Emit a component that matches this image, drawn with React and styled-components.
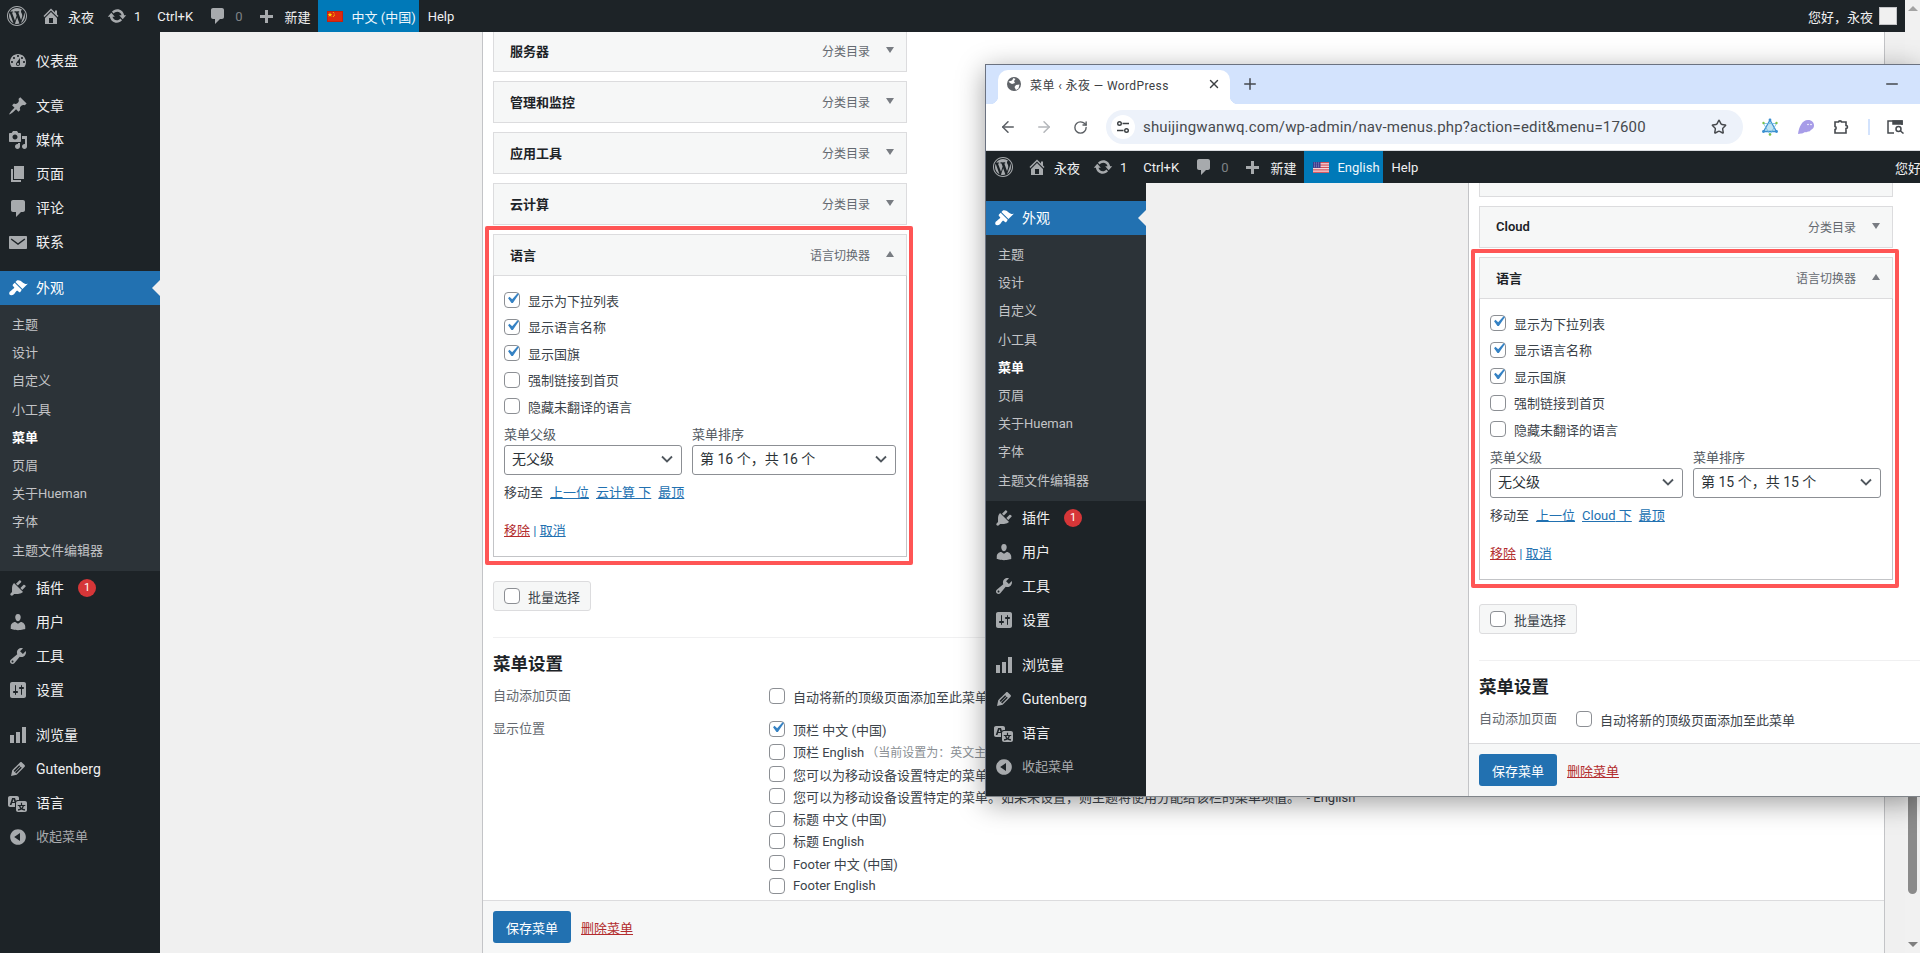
import React from "react";
import styled, { createGlobalStyle } from "styled-components";
import { ArrowLeft, ArrowRight, RotateCw, X, Plus, Minus, Star } from "lucide-react";

const FONT = `Roboto, "Noto Sans CJK SC", sans-serif`;

const Global = createGlobalStyle`
  * { box-sizing: border-box; }
  html, body { margin: 0; padding: 0; height: 953px; overflow: hidden; background: #f0f0f0; }
  body { font-family: ${FONT}; font-size: 13px; color: #3c434a; }
`;

const D = {
  wp: "M20 10c0-5.52-4.48-10-10-10S0 4.48 0 10s4.48 10 10 10 10-4.48 10-10zM10 1.01c4.97 0 8.99 4.02 8.99 8.99s-4.02 8.99-8.99 8.99S1.01 14.97 1.01 10 5.03 1.01 10 1.01zM8.01 14.82L4.96 6.61c.49-.03 1.05-.08 1.05-.08.43-.05.38-1.01-.06-.99 0 0-1.29.1-2.13.1-.15 0-.33 0-.52-.01 1.44-2.17 3.9-3.6 6.7-3.6 2.09 0 3.99.79 5.41 2.09-.6-.08-1.45.35-1.45 1.42 0 .66.38 1.22.79 1.88.31.54.5 1.22.5 2.21 0 1.34-1.27 4.48-1.27 4.48l-2.71-7.5c.48-.03.75-.16.75-.16.43-.05.38-1.1-.05-1.08 0 0-1.3.11-2.14.11-.78 0-2.11-.11-2.11-.11-.43-.02-.48 1.06-.05 1.08l.84.08 1.12 3.04zm6.02 2.15L16.64 10s.67-1.69.39-3.81c.63 1.14.94 2.42.94 3.81 0 2.96-1.56 5.58-3.94 6.97zM2.68 6.77L6.5 17.25c-2.67-1.3-4.47-4.08-4.47-7.25 0-1.16.2-2.23.65-3.23zm7.45 4.53l2.29 6.25c-.75.27-1.57.42-2.42.42-.72 0-1.41-.11-2.06-.3z",
  home: "M16 8.5l1.53 1.53-1.06 1.06L10 4.62l-6.47 6.47-1.06-1.06L10 2.5l4 4v-2h2v4zm-6-2.46l6 5.99V18H4v-5.97zM12 17v-5H8v5h4z",
  update: "M10.2 3.28c3.53 0 6.43 2.61 6.92 6h2.08l-3.5 4-3.5-4h2.32c-.45-1.97-2.21-3.45-4.32-3.45-1.45 0-2.73.71-3.54 1.78L4.95 5.66C6.23 4.2 8.11 3.28 10.2 3.28zm-.4 13.44c-3.52 0-6.43-2.61-6.92-6H.8l3.5-4c1.17 1.33 2.33 2.67 3.5 4H5.48c.45 1.97 2.21 3.45 4.32 3.45 1.45 0 2.73-.71 3.54-1.78l1.71 1.95c-1.28 1.46-3.15 2.38-5.25 2.38z",
  comment: "M5 2h9c1.1 0 2 .9 2 2v7c0 1.1-.9 2-2 2h-2l-5 5v-5H5c-1.1 0-2-.9-2-2V4c0-1.1.9-2 2-2z",
  plus: "M17 9v3h-5v5H9v-5H4V9h5V4h3v5h5z",
  dashboard: "M3.76 16h12.48c1.1-1.37 1.76-3.11 1.76-5 0-4.42-3.58-8-8-8s-8 3.58-8 8c0 1.89.66 3.63 1.76 5zM10 4c.55 0 1 .45 1 1s-.45 1-1 1-1-.45-1-1 .45-1 1-1zM6 6c.55 0 1 .45 1 1s-.45 1-1 1-1-.45-1-1 .45-1 1-1zm8 0c.55 0 1 .45 1 1s-.45 1-1 1-1-.45-1-1 .45-1 1-1zm-5.37 5.55L12 7v6c0 1.1-.9 2-2 2s-2-.9-2-2c0-.57.24-1.08.63-1.45zM4 10c.55 0 1 .45 1 1s-.45 1-1 1-1-.45-1-1 .45-1 1-1zm12 0c.55 0 1 .45 1 1s-.45 1-1 1-1-.45-1-1 .45-1 1-1zm-5 3c0-.55-.45-1-1-1s-1 .45-1 1 .45 1 1 1 1-.45 1-1z",
  post: "M10.44 3.02l1.82-1.82 6.36 6.35-1.83 1.82c-1.05-.68-2.48-.57-3.41.36l-.75.75c-.92.93-1.04 2.35-.35 3.41l-1.83 1.82-2.41-2.41-2.8 2.79c-.42.42-3.38 2.71-3.8 2.29s1.86-3.39 2.28-3.81l2.79-2.79L4.1 9.36l1.83-1.82c1.05.69 2.48.57 3.4-.36l.75-.75c.93-.92 1.05-2.35.36-3.41z",
  media: "M13 11V4c0-.55-.45-1-1-1h-1.67L9 1H5L3.67 3H2c-.55 0-1 .45-1 1v7c0 .55.45 1 1 1h10c.55 0 1-.45 1-1zM7 4.5c1.38 0 2.5 1.12 2.5 2.5S8.38 9.5 7 9.5 4.5 8.38 4.5 7 5.62 4.5 7 4.5zM14 6h5v10.5c0 1.38-1.12 2.5-2.5 2.5S14 17.88 14 16.5s1.12-2.5 2.5-2.5c.17 0 .34.02.5.05V9h-3V6zm-4 8.05V13h2v3.5c0 1.38-1.12 2.5-2.5 2.5S7 17.88 7 16.5 8.12 14 9.5 14c.17 0 .34.02.5.05z",
  pages: "M6 15V2h10v13H6zm-1 1h8v2H3V5h2v11z",
  bubble: "M5 2h10c1.1 0 2 .9 2 2v8c0 1.1-.9 2-2 2h-2l-5 5v-5H5c-1.1 0-2-.9-2-2V4c0-1.1.9-2 2-2z",
  mail: "M2 4h16c.55 0 1 .45 1 1v11c0 .55-.45 1-1 1H2c-.55 0-1-.45-1-1V5c0-.55.45-1 1-1zm1.6 2.4l-.9 1.1 7.3 5.6 7.3-5.6-.9-1.1-6.4 4.9z",
  brush: "M14.48 11.06L7.41 3.99l1.5-1.5c.5-.56 2.3-.47 3.51.32 1.21.8 1.43 1.28 2.91 2.1 1.18.64 2.45 1.26 4.45.85zm-.71.71L6.7 4.7 4.93 6.47c-.39.39-.39 1.02 0 1.41l1.06 1.06c.39.39.39 1.03 0 1.42-.6.6-1.43 1.11-2.21 1.69-.35.26-.7.53-1.01.84C1.43 13.23.78 15.37 1.5 16.5c.7 1.13 3.09.97 4.44-.36.31-.31.58-.66.84-1.01.58-.78 1.09-1.61 1.69-2.21.39-.39 1.03-.39 1.42 0l1.06 1.06c.39.39 1.02.39 1.41 0z",
  plugin: "M13.11 4.36L9.87 7.6 8 5.73l3.24-3.24c.35-.34 1.05-.2 1.56.32.52.51.66 1.21.31 1.55zm-8 1.77l.91-1.12 9.01 9.01-1.19.84c-.71.71-2.63 1.16-3.82 1.16H6.14L4.9 17.26c-.59.59-1.54.59-2.12 0-.59-.58-.59-1.53 0-2.12l1.24-1.24v-3.88c0-1.13.4-3.19 1.09-3.89zm7.26 3.97l3.24-3.24c.34-.35 1.04-.21 1.55.31.52.51.66 1.21.31 1.55l-3.24 3.25z",
  user: "M10 9.25c-2.27 0-2.73-3.44-2.73-3.44C7 4.02 7.82 2 9.97 2c2.16 0 2.98 2.02 2.71 3.81 0 0-.41 3.44-2.68 3.44zm0 2.57L12.72 10c2.39 0 4.52 2.33 4.52 4.53v2.49s-3.65 1.13-7.24 1.13c-3.65 0-7.24-1.13-7.24-1.13v-2.49c0-2.25 1.94-4.48 4.47-4.48z",
  tools: "M16.68 9.77c-1.34 1.34-3.3 1.67-4.95.99l-5.41 6.52c-.99.99-2.59.99-3.58 0s-.99-2.59 0-3.57l6.52-5.42c-.68-1.65-.35-3.61.99-4.95 1.28-1.28 3.12-1.62 4.72-1.06l-2.89 2.89 2.82 2.82 2.86-2.87c.53 1.58.18 3.39-1.08 4.65zM3.81 16.21c.4.39 1.04.39 1.43 0 .4-.4.4-1.04 0-1.43-.39-.4-1.03-.4-1.43 0-.39.39-.39 1.03 0 1.43z",
  settings: "M18 16V4c0-1.1-.9-2-2-2H4c-1.1 0-2 .9-2 2v12c0 1.1.9 2 2 2h12c1.1 0 2-.9 2-2zM8 11h1c.55 0 1 .45 1 1s-.45 1-1 1H8v1.5c0 .28-.22.5-.5.5s-.5-.22-.5-.5V13H6c-.55 0-1-.45-1-1s.45-1 1-1h1V5.5c0-.28.22-.5.5-.5s.5.22.5.5V11zm5-2h-1c-.55 0-1-.45-1-1s.45-1 1-1h1V5.5c0-.28.22-.5.5-.5s.5.22.5.5V7h1c.55 0 1 .45 1 1s-.45 1-1 1h-1v5.5c0 .28-.22.5-.5.5s-.5-.22-.5-.5V9z",
  chart: "M18 18V2h-4v16h4zm-6 0V7H8v11h4zm-6 0v-8H2v8h4z",
  pen: "M13.89 3.39l2.71 2.72c.46.46.42 1.24.03 1.64l-8.01 8.02-5.56 1.16 1.16-5.58s7.6-7.63 7.99-8.03c.39-.39 1.22-.39 1.68.07zm-2.73 2.79l-5.59 5.61 1.11 1.11 5.54-5.65zm-2.97 8.23l5.58-5.6-1.07-1.08-5.59 5.6z",
  translate: "M11 7H9.49c-.63 0-1.25.3-1.59.7L7 5H4.13l-2.39 7h1.69l.74-2H7v4H2c-1.1 0-2-.9-2-2V5c0-1.1.9-2 2-2h7c1.1 0 2 .9 2 2v2zM6.51 9H4.49l1-2.93zM10 8h7c1.1 0 2 .9 2 2v7c0 1.1-.9 2-2 2h-7c-1.1 0-2-.9-2-2v-7c0-1.1.9-2 2-2zm7.25 5v-1.08h-3.17V9.75h-1.16v2.17H9.75V13h1.28c.11.85.56 1.85 1.28 2.62-.87.36-1.89.62-2.31.62-.01.02.22.97.2 1.46.84 0 2.21-.5 3.28-1.15 1.09.65 2.48 1.15 3.34 1.15-.02-.49.2-1.44.2-1.46-.43 0-1.49-.27-2.38-.63.7-.77 1.14-1.77 1.25-2.61h1.36zm-3.81 1.93c-.5-.46-.85-1.13-1.01-1.93h2.09c-.17.8-.51 1.47-1 1.93l-.04.03s-.03-.02-.04-.03z",
  collapse: "M10 2.16c4.33 0 7.84 3.51 7.84 7.84s-3.51 7.84-7.84 7.84S2.16 14.33 2.16 10 5.71 2.16 10 2.16zm2 11.72V6.12L6.18 9.97z",
};

const Dash = ({ d, size = 20 }) => (
  <svg width={size} height={size} viewBox="0 0 20 20" fill="currentColor" fillRule="evenodd" style={{ flex: "none", display: "block" }}>
    <path d={D[d]} />
  </svg>
);

const FlagCN = () => (
  <svg width="16" height="11" viewBox="0 0 16 11" style={{ flex: "none" }}>
    <rect width="16" height="11" fill="#de2910" />
    <rect x=".5" y=".5" width="15" height="10" fill="none" stroke="#a51c0c" strokeOpacity=".5" />
    <polygon points="3,1.2 3.6,3 5.4,3 4,4.1 4.5,5.8 3,4.8 1.5,5.8 2,4.1 .6,3 2.4,3" fill="#ffde00" />
    <circle cx="6.3" cy="1.5" r=".5" fill="#ffde00" />
    <circle cx="7.2" cy="2.9" r=".5" fill="#ffde00" />
    <circle cx="7.2" cy="4.4" r=".5" fill="#ffde00" />
    <circle cx="6.3" cy="5.6" r=".5" fill="#ffde00" />
  </svg>
);

const FlagUS = () => (
  <svg width="16" height="11" viewBox="0 0 16 11" style={{ flex: "none" }}>
    <rect width="16" height="11" fill="#fff" />
    {[0, 1.7, 3.4, 5.1, 6.8, 8.5, 10.2].map((y) => (
      <rect key={y} y={y} width="16" height=".85" fill="#c8313e" />
    ))}
    <rect width="7.5" height="5.9" fill="#3c3b8e" />
    {[1, 3, 5].map((x) => [1, 3, 4.8].map((y) => <circle key={x + "-" + y} cx={x + .7} cy={y} r=".4" fill="#fff" />))}
  </svg>
);

/* ---------- admin bar ---------- */
const Bar = styled.header`
  flex: none;
  height: 32px;
  background: #1d2327;
  color: #f0f0f1;
  display: flex;
  align-items: stretch;
  font-size: 13px;
  white-space: nowrap;
  overflow: hidden;
`;
const BarItem = styled.div`
  display: flex;
  align-items: center;
  gap: ${(p) => p.$gap ?? 7}px;
  padding: 0 ${(p) => p.$r ?? 8}px 0 ${(p) => p.$l ?? 8}px;
  background: ${(p) => (p.$active ? "#0079b8" : "transparent")};
  color: ${(p) => (p.$active ? "#eef6fb" : "#f0f0f1")};
`;
const BarIcon = styled.span`
  display: flex;
  color: #a7aaad;
`;
const Dim = styled.span`
  color: #7d8286;
`;
const BarRight = styled(BarItem)`
  margin-left: auto;
  margin-right: ${(p) => p.$over || 0}px;
  padding: 0 8px 0 0;
  gap: 6px;
`;
const Avatar = styled.span`
  width: 18px;
  height: 18px;
  background: #f0f0f0;
  border: 1px solid #c3c4c7;
`;

const AdminBar = ({ lang, flag, over }) => (
  <Bar>
    <BarItem $l={7} $r={7}><BarIcon><Dash d="wp" /></BarIcon></BarItem>
    <BarItem $l={7} $r={5}><BarIcon><Dash d="home" /></BarIcon>永夜</BarItem>
    <BarItem><BarIcon><Dash d="update" /></BarIcon>1</BarItem>
    <BarItem>Ctrl+K</BarItem>
    <BarItem $l={7} $gap={7}><BarIcon><Dash d="comment" /></BarIcon><Dim>0</Dim></BarItem>
    <BarItem $l={6} $gap={8}><BarIcon><Dash d="plus" /></BarIcon>新建</BarItem>
    <BarItem $active $l={9} $r={3} $gap={8}>{flag}{lang}</BarItem>
    <BarItem $l={9}>Help</BarItem>
    <BarRight $over={over}>您好，永夜<Avatar /></BarRight>
  </Bar>
);

/* ---------- side menu ---------- */
const Side = styled.nav`
  flex: none;
  width: 160px;
  background: #1d2327;
  padding-top: ${(p) => p.$top}px;
  color: #f0f0f1;
`;
const Entry = styled.div`
  position: relative;
  height: 34px;
  display: flex;
  align-items: center;
  gap: 8px;
  padding-left: 8px;
  font-size: 14px;
  background: ${(p) => (p.$current ? "#2271b1" : "transparent")};
  color: ${(p) => (p.$current ? "#fff" : "inherit")};
  ${(p) => p.$muted && "color:#a7aaad;font-size:13px;"}
`;
const EntryLabel = styled.span`
  line-height: 34px;
`;
const EntryIcon = styled.span`
  display: flex;
  color: ${(p) => (p.$current ? "#fff" : "#a7aaad")};
`;
const Notch = styled.i`
  position: absolute;
  right: 0;
  top: 9px;
  border: 8px solid transparent;
  border-right-color: #f0f0f0;
  border-left-width: 0;
`;
const Sep = styled.div`
  height: ${(p) => (p.$tall ? 12 : 11)}px;
`;
const Sub = styled.ul`
  list-style: none;
  margin: 0;
  padding: 6px 0;
  background: #2c3338;
`;
const SubItem = styled.li`
  height: 28.2px;
  line-height: 28.2px;
  padding-left: 12px;
  font-size: 13px;
  color: ${(p) => (p.$on ? "#fff" : "#c3c4c7")};
  font-weight: ${(p) => (p.$on ? 600 : 400)};
`;
const Badge = styled.span`
  width: 18px;
  height: 18px;
  border-radius: 50%;
  margin-left: 6px;
  background: #d63638;
  color: #fff;
  font-size: 11px;
  line-height: 18px;
  text-align: center;
`;

const upperMenu = [
  ["dashboard", "仪表盘"], "sep",
  ["post", "文章"], ["media", "媒体"], ["pages", "页面"], ["bubble", "评论"], ["mail", "联系"], "tall",
];
const subMenu = ["主题", "设计", "自定义", "小工具", "菜单", "页眉", "关于Hueman", "字体", "主题文件编辑器"];
const lowerMenu = [
  ["plugin", "插件", 1], ["user", "用户"], ["tools", "工具"], ["settings", "设置"], "sep",
  ["chart", "浏览量"], ["pen", "Gutenberg"], ["translate", "语言"],
];

const renderEntries = (list) =>
  list.map((e, i) =>
    typeof e === "string" ? (
      <Sep key={i} $tall={e === "tall"} />
    ) : (
      <Entry key={e[1]}>
        <EntryIcon><Dash d={e[0]} /></EntryIcon>
        <EntryLabel>{e[1]}</EntryLabel>
        {e[2] && <Badge>{e[2]}</Badge>}
      </Entry>
    )
  );

const SideMenu = ({ scrolled }) => (
  <Side $top={scrolled ? 18 : 12}>
    {!scrolled && renderEntries(upperMenu)}
    <Entry $current>
      <EntryIcon $current><Dash d="brush" /></EntryIcon><EntryLabel>外观</EntryLabel><Notch />
    </Entry>
    <Sub>
      {subMenu.map((s) => <SubItem key={s} $on={s === "菜单"}>{s}</SubItem>)}
    </Sub>
    {renderEntries(lowerMenu)}
    <Entry $muted>
      <EntryIcon><Dash d="collapse" /></EntryIcon><EntryLabel>收起菜单</EntryLabel>
    </Entry>
  </Side>
);

/* ---------- form bits ---------- */
const Box = styled.span`
  flex: none;
  width: 16px;
  height: 16px;
  border: 1px solid #8c8f94;
  border-radius: 4px;
  background: #fff;
  display: flex;
  align-items: center;
  justify-content: center;
`;
const Tick = styled.svg`
  flex: none;
  display: block;
  margin: -3px -3px 0 -3px;
`;
const Check = ({ on }) => (
  <Box>
    {on && (
      <Tick width="21" height="21" viewBox="0 0 20 20">
        <path d="M14.83 4.89l1.34.94-5.81 8.38H9.02L5.78 9.67l1.34-1.25 2.57 2.4z" fill="#3582c4" />
      </Tick>
    )}
  </Box>
);
const Row = styled.label`
  display: flex;
  align-items: center;
  gap: 8px;
  height: 26.5px;
  white-space: nowrap;
`;
const Note = styled.span`
  font-size: 12px;
  color: #8a8f94;
  margin-left: -6px;
`;

/* ---------- accordion ---------- */
const Item = styled.section`
  width: 414px;
  margin-bottom: 9px;
  flex: none;
  ${(p) => p.$first && `margin-top: ${p.$first}px;`}
`;
const ItemHead = styled.div`
  height: 42px;
  border: 1px solid #dcdcde;
  background: #f6f7f7;
  display: flex;
  align-items: center;
  padding: 0 12px 2px 16px;
  gap: 16px;
`;
const ItemTitle = styled.strong`
  font-size: 13px;
  font-weight: 600;
  color: #1d2327;
  margin-right: auto;
`;
const ItemKind = styled.span`
  font-size: 12px;
  color: #646970;
`;
const Arrow = styled.i`
  width: 0;
  height: 0;
  border-left: 4.5px solid transparent;
  border-right: 4.5px solid transparent;
  ${(p) => (p.$up ? "border-bottom: 6px solid #787c82;" : "border-top: 6px solid #787c82;")}
`;
const ItemBody = styled.div`
  margin-top: -1px;
  height: 282px;
  border: 1px solid #c3c4c7;
  border-top-color: #dcdcde;
  padding: 11px 10px 0;
`;
const Hilite = styled.div`
  position: relative;
  width: 414px;
  flex: none;
  &::after {
    content: "";
    position: absolute;
    inset: -8px -6px -8px -8px;
    border: 4px solid #ff5555;
    border-radius: 2px;
    pointer-events: none;
  }
`;
const Selects = styled.div`
  display: flex;
  gap: 10px;
  margin-top: 6px;
`;
const Field = styled.div`
  display: flex;
  flex-direction: column;
  width: ${(p) => p.$w}px;
  color: #50575e;
  line-height: 18px;
`;
const Sel = styled.div`
  height: 30px;
  margin-top: 1px;
  border: 1px solid #8c8f94;
  border-radius: 3px;
  display: flex;
  align-items: center;
  justify-content: space-between;
  padding: 0 8px 2px 7px;
  font-size: 14px;
  color: #2c3338;
  white-space: nowrap;
`;
const Chev = () => (
  <svg width="12" height="8" viewBox="0 0 12 8"><path d="M1 1.5 6 6.5 11 1.5" fill="none" stroke="#50575e" strokeWidth="1.8" /></svg>
);
const Moves = styled.div`
  margin-top: 9px;
  display: flex;
  gap: 7px;
  line-height: 18px;
`;
const A = styled.a`
  color: ${(p) => (p.$danger ? "#b32d2e" : "#2271b1")};
  text-decoration: underline;
`;
const Actions = styled.div`
  margin-top: 20px;
  line-height: 18px;
  color: #2271b1;
`;

const LangBody = ({ w1, w2, n, after }) => (
  <ItemBody>
    <Row><Check on />显示为下拉列表</Row>
    <Row><Check on />显示语言名称</Row>
    <Row><Check on />显示国旗</Row>
    <Row><Check />强制链接到首页</Row>
    <Row><Check />隐藏未翻译的语言</Row>
    <Selects>
      <Field $w={w1}>菜单父级<Sel>无父级<Chev /></Sel></Field>
      <Field $w={w2}>菜单排序<Sel>{`第 ${n} 个，共 ${n} 个`}<Chev /></Sel></Field>
    </Selects>
    <Moves>移动至 <A>上一位</A><A>{after} 下</A><A>最顶</A></Moves>
    <Actions><A $danger>移除</A> | <A>取消</A></Actions>
  </ItemBody>
);

const Closed = ({ title, first }) => (
  <Item $first={first}>
    <ItemHead>
      <ItemTitle>{title}</ItemTitle>
      <ItemKind>分类目录</ItemKind>
      <Arrow />
    </ItemHead>
  </Item>
);

const LangItem = (p) => (
  <Hilite>
    <ItemHead>
      <ItemTitle>语言</ItemTitle>
      <ItemKind>语言切换器</ItemKind>
      <Arrow $up />
    </ItemHead>
    <LangBody {...p} />
  </Hilite>
);

/* ---------- panel ---------- */
const Work = styled.div`
  flex: 1;
  min-height: 0;
  display: flex;
`;
const Gutter = styled.div`
  flex: none;
  width: 322px;
  background: #f0f0f0;
`;
const Panel = styled.main`
  flex: 1;
  min-width: 0;
  background: #fff;
  border-left: 1px solid #c3c4c7;
  border-right: ${(p) => (p.$edge ? "1px solid #c3c4c7" : "0")};
  display: flex;
  flex-direction: column;
`;
const Scroll = styled.div`
  flex: 1;
  min-height: 0;
  overflow: hidden;
  padding-left: 10px;
  display: flex;
  flex-direction: column;
`;
const Bulk = styled.div`
  flex: none;
  margin-top: 24px;
  width: 98px;
  height: 30px;
  border: 1px solid #dcdcde;
  border-radius: 3px;
  background: #f6f7f7;
  display: flex;
  align-items: center;
  gap: 8px;
  padding-left: 10px;
  white-space: nowrap;
`;
const Rule = styled.hr`
  flex: none;
  width: 100%;
  border: 0;
  border-top: 1px solid #f0f0f1;
  margin: 26px 0 0;
`;
const SetTitle = styled.h3`
  flex: none;
  margin: 14px 0 0;
  font-size: 17.5px;
  line-height: 25px;
  font-weight: 600;
  color: #1d2327;
`;
const SetGroup = styled.div`
  flex: none;
  display: flex;
  margin-top: ${(p) => p.$mt}px;
`;
const SetLabel = styled.div`
  flex: none;
  width: ${(p) => p.$w}px;
  line-height: 21px;
  color: #646970;
`;
const SetRow = styled(Row)`
  height: 22.3px;
`;
const Foot = styled.footer`
  flex: none;
  height: 53px;
  border-top: 1px solid #dcdcde;
  background: #f6f7f7;
  display: flex;
  align-items: center;
  gap: 10px;
  padding-left: 10px;
`;
const Save = styled.button`
  width: 78px;
  height: 32px;
  border: 0;
  border-radius: 3px;
  background: #2271b1;
  color: #fff;
  font: 13px ${FONT};
`;

const Settings = ({ w }) => (
  <>
    <Rule />
    <SetTitle>菜单设置</SetTitle>
    <SetGroup $mt={8}>
      <SetLabel $w={w}>自动添加页面</SetLabel>
      <SetRow><Check />自动将新的顶级页面添加至此菜单</SetRow>
    </SetGroup>
    <SetGroup $mt={11}>
      <SetLabel $w={w}>显示位置</SetLabel>
      <div>
        <SetRow><Check on />顶栏 中文 (中国)</SetRow>
        <SetRow><Check />顶栏 English<Note>（当前设置为：英文主菜单）</Note></SetRow>
        <SetRow><Check />您可以为移动设备设置特定的菜单。如果未设置，则主题将使用分配给该栏的菜单项值。&nbsp;&nbsp;- 中文 (中国)</SetRow>
        <SetRow><Check />您可以为移动设备设置特定的菜单。如果未设置，则主题将使用分配给该栏的菜单项值。&nbsp;&nbsp;- English</SetRow>
        <SetRow><Check />标题 中文 (中国)</SetRow>
        <SetRow><Check />标题 English</SetRow>
        <SetRow><Check />Footer 中文 (中国)</SetRow>
        <SetRow><Check />Footer English</SetRow>
      </div>
    </SetGroup>
  </>
);

const Footer = () => (
  <Foot>
    <Save>保存菜单</Save>
    <A $danger>删除菜单</A>
  </Foot>
);

/* ---------- page frame ---------- */
const Page = styled.div`
  position: relative;
  width: 1920px;
  height: 953px;
  display: flex;
  overflow: hidden;
`;
const Desk = styled.div`
  flex: 1;
  min-width: 0;
  display: flex;
  flex-direction: column;
`;
const RightPad = styled.div`
  flex: none;
  width: 20px;
  background: #f0f0f0;
`;
const Scrollbar = styled.div`
  flex: none;
  width: 15px;
  background: #f1f1f1;
  display: flex;
  flex-direction: column;
  align-items: center;
  padding: 6px 0;
`;
const Thumb = styled.div`
  width: 9px;
  height: 520px;
  margin-top: auto;
  margin-bottom: 48px;
  border-radius: 5px;
  background: #8b8b8b;
`;
const SbArrow = styled.i`
  width: 0;
  height: 0;
  border-left: 5px solid transparent;
  border-right: 5px solid transparent;
  ${(p) => (p.$up ? "border-bottom: 5px solid #a3a3a3;" : "border-top: 5px solid #7f7f7f;")}
`;

/* ---------- browser window ---------- */
const Win = styled.div`
  position: absolute;
  left: 985px;
  top: 64px;
  right: 0;
  height: 733px;
  display: flex;
  flex-direction: column;
  background: #fff;
  border: 1px solid #6b7280;
  border-right: 0;
  border-bottom-color: #80858a;
  box-shadow: 0 6px 26px rgba(0, 0, 0, 0.38);
`;
const TabStrip = styled.div`
  flex: none;
  height: 39px;
  background: #d3e3fd;
  display: flex;
  align-items: flex-end;
  padding-left: 12px;
`;
const Tab = styled.div`
  position: relative;
  width: 232px;
  height: 34px;
  background: #fff;
  border-radius: 10px 10px 0 0;
  display: flex;
  align-items: center;
  padding: 0 9px 6px;
  gap: 9px;
  font-size: 12px;
  letter-spacing: 0.4px;
  color: #3c4043;
  white-space: nowrap;
  &::before, &::after {
    content: "";
    position: absolute;
    bottom: 0;
    width: 8px;
    height: 8px;
  }
  &::before { left: -8px; background: radial-gradient(circle at 0 0, transparent 8px, #fff 8.5px); }
  &::after { right: -8px; background: radial-gradient(circle at 100% 0, transparent 8px, #fff 8.5px); }
`;
const TabTitle = styled.span`
  flex: 1;
`;
const NewTab = styled.span`
  display: flex;
  margin: 0 0 11px 11px;
  color: #45494e;
`;
const MinBtn = styled.span`
  display: flex;
  margin: 0 19px 11px auto;
  color: #45494e;
`;
const Tools = styled.div`
  flex: none;
  height: 47px;
  border-bottom: 1px solid #dadce0;
  display: flex;
  align-items: center;
  padding-left: 4px;
  color: #5f6368;
`;
const ToolBtn = styled.span`
  flex: none;
  width: 36px;
  display: flex;
  justify-content: center;
  color: ${(p) => p.$c || "#5a5e63"};
`;
const Omni = styled.div`
  flex: none;
  width: 637px;
  height: 34px;
  margin: 0 9px 0 8px;
  border-radius: 17px;
  background: #edf2fa;
  display: flex;
  align-items: center;
  padding: 0 16px 0 5px;
  color: #474a4e;
  font-size: 15px;
`;
const Tune = styled.span`
  flex: none;
  width: 24px;
  height: 24px;
  border-radius: 50%;
  background: #fff;
  display: flex;
  align-items: center;
  justify-content: center;
  margin-right: 8px;
`;
const Url = styled.span`
  flex: 1;
  white-space: nowrap;
  letter-spacing: 0.17px;
`;
const Divider = styled.span`
  flex: none;
  width: 2px;
  height: 16px;
  background: #d3e3fd;
  margin: 0 8px;
`;
const WinBody = styled.div`
  flex: 1;
  min-height: 0;
  display: flex;
  flex-direction: column;
`;

const ChromeWindow = () => (
  <Win>
    <TabStrip>
      <Tab>
        <svg width="14" height="14" viewBox="0 0 14 14" style={{ flex: "none" }}>
          <circle cx="7" cy="7" r="7" fill="#5f6368" />
          <path d="M1.5 4.5 5 3.5 6.5 1 8.5 2 7 4 8 6 5 7 3 6zM9 8l3.5-.5-1 4L9 13 7.5 10z" fill="#fff" />
        </svg>
        <TabTitle>菜单 ‹ 永夜 — WordPress</TabTitle>
        <X size={14} strokeWidth={2.4} color="#3c4043" />
      </Tab>
      <NewTab><Plus size={18} strokeWidth={2} /></NewTab>
      <MinBtn><Minus size={18} strokeWidth={2} /></MinBtn>
    </TabStrip>
    <Tools>
      <ToolBtn><ArrowLeft size={18} strokeWidth={2} /></ToolBtn>
      <ToolBtn $c="#b4b7bb"><ArrowRight size={18} strokeWidth={2} /></ToolBtn>
      <ToolBtn><RotateCw size={15} strokeWidth={2.2} /></ToolBtn>
      <Omni>
        <Tune>
          <svg width="14" height="14" viewBox="0 0 14 14" fill="none" stroke="#3c4043" strokeWidth="1.4">
            <circle cx="3.5" cy="3.5" r="1.8" /><path d="M6.5 3.5H13M1 10.5h6.5" /><circle cx="10.5" cy="10.5" r="1.8" />
          </svg>
        </Tune>
        <Url>shuijingwanwq.com/wp-admin/nav-menus.php?action=edit&amp;menu=17600</Url>
        <Star size={16} strokeWidth={2.2} color="#474a4e" />
      </Omni>
      <ToolBtn>
        <svg width="16" height="18" viewBox="0 0 16 18" fill="none">
          <path d="M8 2 14.5 13.5H1.5z" stroke="#3b8fd0" strokeWidth="1.3" fill="#bfe3f2" />
          <path d="M1.5 5.5 14.5 5.5 8 16.5z" stroke="#69b7e0" strokeWidth=".8" />
          <circle cx="8" cy="2" r="1.4" fill="#3b8fd0" /><circle cx="1.5" cy="13.5" r="1.4" fill="#3b8fd0" /><circle cx="14.5" cy="13.5" r="1.4" fill="#3b8fd0" />
          <circle cx="1.5" cy="5" r="1.2" fill="#7dc24b" /><circle cx="14.5" cy="5" r="1.2" fill="#7dc24b" /><circle cx="8" cy="16.5" r="1.3" fill="#7dc24b" />
        </svg>
      </ToolBtn>
      <ToolBtn>
        <svg width="18" height="16" viewBox="0 0 18 16">
          <path d="M1 15C2 8 5 1 11 1c4 0 6 2.500 6 5.500 0 3-2 3.500-3 4.500-1 .8-1.500 2-3 1.500-1 .8-2 1-3 .5-1 .8-2.500 1.500-4 1.500z" fill="#a79ce8" />
          <circle cx="11" cy="5.500" r=".8" fill="#fff" /><circle cx="14" cy="5.500" r=".8" fill="#fff" />
        </svg>
      </ToolBtn>
      <ToolBtn>
        <svg width="16" height="16" viewBox="0 0 16 16" fill="none" stroke="#45494e" strokeWidth="1.6">
          <path d="M1 3h3.500c0-1.500 3-1.500 3 0H12v3.500c2 0 2 3 0 3V14H1v-3.500c1.500 0 1.500-3 0-3z" />
        </svg>
      </ToolBtn>
      <Divider />
      <ToolBtn>
        <svg width="18" height="14" viewBox="0 0 18 14" fill="none" stroke="#45494e" strokeWidth="1.5">
          <path d="M7 13H1V1h14v4" /><path d="M6 1h9v3H6z" fill="#45494e" /><circle cx="11.500" cy="9" r="2.500" /><path d="M13.500 11l3 2.500" />
        </svg>
      </ToolBtn>
    </Tools>
    <WinBody>
      <AdminBar lang="English" flag={<FlagUS />} over={-72} />
      <Work>
        <SideMenu scrolled />
        <Gutter />
        <Panel>
          <Scroll>
            <Closed title="Apps" first={-28} />
            <Closed title="Cloud" />
            <LangItem w1={193} w2={188} n={15} after="Cloud" />
            <Bulk><Check />批量选择</Bulk>
            <Settings w={97} />
          </Scroll>
          <Footer />
        </Panel>
      </Work>
    </WinBody>
  </Win>
);

export default function App() {
  return (
    <>
      <Global />
      <Page>
        <Desk>
          <AdminBar lang="中文 (中国)" flag={<FlagCN />} />
          <Work>
            <SideMenu />
            <Gutter />
            <Panel $edge>
              <Scroll>
                <Closed title="服务器" first={-2} />
                <Closed title="管理和监控" />
                <Closed title="应用工具" />
                <Closed title="云计算" />
                <LangItem w1={178} w2={204} n={16} after="云计算" />
                <Bulk><Check />批量选择</Bulk>
                <Settings w={276} />
              </Scroll>
              <Footer />
            </Panel>
            <RightPad />
          </Work>
        </Desk>
        <Scrollbar>
          <SbArrow $up />
          <Thumb />
          <SbArrow />
        </Scrollbar>
        <ChromeWindow />
      </Page>
    </>
  );
}
